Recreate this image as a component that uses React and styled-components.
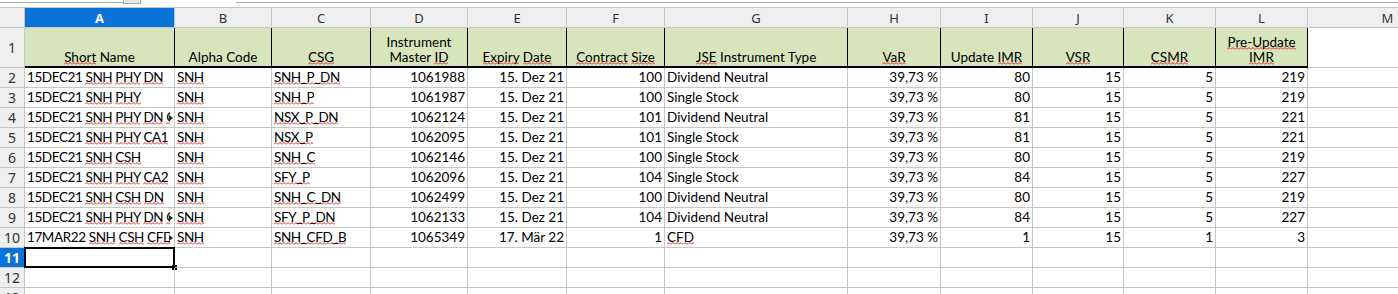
import React from 'react';
import styled, { createGlobalStyle, css } from 'styled-components';

const GlobalStyle = createGlobalStyle`
  html, body {
    margin: 0;
    padding: 0;
    background: #ffffff;
    overflow: hidden;
  }
  body {
    font-family: Lato, "Open Sans", Arial, sans-serif;
  }
`;

const squiggle = `url("data:image/svg+xml,%3Csvg xmlns='http://www.w3.org/2000/svg' width='4' height='3'%3E%3Cpath d='M0 2.5 L2 0.5 L4 2.5' fill='none' stroke='%23e0241b' stroke-width='1'/%3E%3C/svg%3E")`;

const columns = [
  { key: 'A', width: 150 },
  { key: 'B', width: 97 },
  { key: 'C', width: 99 },
  { key: 'D', width: 97 },
  { key: 'E', width: 99 },
  { key: 'F', width: 98 },
  { key: 'G', width: 183 },
  { key: 'H', width: 93 },
  { key: 'I', width: 92 },
  { key: 'J', width: 91 },
  { key: 'K', width: 92 },
  { key: 'L', width: 92 },
  { key: 'M', width: 160 },
];

// text pieces: a plain string, or { s: 'word' } for a word the spell check flags
const headings = [
  [{ s: 'Short' }, ' Name'],
  ['Alpha Code'],
  [{ s: 'CSG' }],
  ['Instrument', '\n', 'Master ', { s: 'ID' }],
  [{ s: 'Expiry' }, ' ', { s: 'Date' }],
  [{ s: 'Contract' }, ' ', { s: 'Size' }],
  [{ s: 'JSE' }, ' Instrument Type'],
  [{ s: 'VaR' }],
  ['Update ', { s: 'IMR' }],
  [{ s: 'VSR' }],
  [{ s: 'CSMR' }],
  [{ s: 'Pre-Update' }, '\n', { s: 'IMR' }],
];

const name = (date, words) => {
  let out = [date];
  words.forEach(w => {
    out.push(' ');
    out.push({ s: w });
  });
  return out;
};

const rows = [
  { a: name('15DEC21', ['SNH', 'PHY', 'DN']), c: 'SNH_P_DN', id: 1061988, exp: '15. Dez 21', size: 100, type: 'Dividend Neutral', imr: 80, csmr: 5, pre: 219 },
  { a: name('15DEC21', ['SNH', 'PHY']), c: 'SNH_P', id: 1061987, exp: '15. Dez 21', size: 100, type: 'Single Stock', imr: 80, csmr: 5, pre: 219 },
  { a: name('15DEC21', ['SNH', 'PHY', 'DN', 'CA1']), clipped: true, c: 'NSX_P_DN', id: 1062124, exp: '15. Dez 21', size: 101, type: 'Dividend Neutral', imr: 81, csmr: 5, pre: 221 },
  { a: name('15DEC21', ['SNH', 'PHY', 'CA1']), c: 'NSX_P', id: 1062095, exp: '15. Dez 21', size: 101, type: 'Single Stock', imr: 81, csmr: 5, pre: 221 },
  { a: name('15DEC21', ['SNH', 'CSH']), c: 'SNH_C', id: 1062146, exp: '15. Dez 21', size: 100, type: 'Single Stock', imr: 80, csmr: 5, pre: 219 },
  { a: name('15DEC21', ['SNH', 'PHY', 'CA2']), c: 'SFY_P', id: 1062096, exp: '15. Dez 21', size: 104, type: 'Single Stock', imr: 84, csmr: 5, pre: 227 },
  { a: name('15DEC21', ['SNH', 'CSH', 'DN']), c: 'SNH_C_DN', id: 1062499, exp: '15. Dez 21', size: 100, type: 'Dividend Neutral', imr: 80, csmr: 5, pre: 219 },
  { a: name('15DEC21', ['SNH', 'PHY', 'DN', 'CA2']), clipped: true, c: 'SFY_P_DN', id: 1062133, exp: '15. Dez 21', size: 104, type: 'Dividend Neutral', imr: 84, csmr: 5, pre: 227 },
  { a: name('17MAR22', ['SNH', 'CSH', 'CFD', 'B']), clipped: true, c: 'SNH_CFD_B', id: 1065349, exp: '17. Mär 22', size: 1, type: [{ s: 'CFD' }], imr: 1, csmr: 1, pre: 3 },
];

const renderText = (pieces) =>
  (Array.isArray(pieces) ? pieces : [pieces]).map((p, i) => {
    if (p === '\n') return <br key={i} />;
    if (typeof p === 'object') return <Spell key={i}>{p.s}</Spell>;
    return <React.Fragment key={i}>{p}</React.Fragment>;
  });

class App extends React.Component {
  renderDataRow = (row, idx) => {
    let cells = [
      { v: row.a, clipped: row.clipped, tight: true },
      { v: [{ s: 'SNH' }], tight: true },
      { v: [{ s: row.c }], tight: true },
      { v: row.id, num: true },
      { v: row.exp, num: true },
      { v: row.size, num: true },
      { v: row.type },
      { v: '39,73 %', num: true },
      { v: row.imr, num: true },
      { v: 15, num: true },
      { v: row.csmr, num: true },
      { v: row.pre, num: true },
      { v: '' },
    ];
    return (
      <React.Fragment key={idx}>
        <RowHeader>{idx + 2}</RowHeader>
        {cells.map((cell, i) => (
          <Cell key={i} $num={cell.num} $tight={cell.tight}>
            <CellText $clipped={cell.clipped}>
              {typeof cell.v === 'number' ? cell.v : renderText(cell.v)}
            </CellText>
            {cell.clipped && <Overflow />}
          </Cell>
        ))}
      </React.Fragment>
    );
  };

  renderEmptyRow = (num, selected) => (
    <React.Fragment key={num}>
      <RowHeader $active={selected}>{num}</RowHeader>
      {columns.map((col, i) => (
        <Cell key={col.key} $selected={selected && i === 0} />
      ))}
    </React.Fragment>
  );

  render() {
    return (
      <>
        <GlobalStyle />
        <Window>
          <FormulaEdge>
            <EdgeLine $w={123} />
            <EdgeKnob />
            <EdgeGap />
            <EdgeLine $grow />
          </FormulaEdge>
          <Sheet $cols={columns.map(c => c.width)}>
            <Corner />
            {columns.map(col => (
              <ColHeader key={col.key} $active={col.key === 'A'}>{col.key}</ColHeader>
            ))}

            <RowHeader>1</RowHeader>
            {headings.map((h, i) => (
              <HeadCell key={i}>
                <span>{renderText(h)}</span>
              </HeadCell>
            ))}
            <Cell />

            {rows.map(this.renderDataRow)}
            {this.renderEmptyRow(11, true)}
            {this.renderEmptyRow(12, false)}
            {this.renderEmptyRow(13, false)}
          </Sheet>
        </Window>
      </>
    );
  }
}

const Window = styled.div`
  width: 1398px;
  height: 294px;
  overflow: hidden;
  background: #ffffff;
`;

const FormulaEdge = styled.div`
  display: flex;
  height: 7px;
  align-items: flex-start;
`;

const EdgeLine = styled.div`
  height: 2px;
  border-bottom: 1px solid #a9a9a9;
  ${props => props.$grow ? css`flex: 1;` : css`width: ${props.$w}px;`}
`;

const EdgeKnob = styled.div`
  width: 16px;
  height: 3px;
  background: #e6e6e6;
  border: 1px solid #a9a9a9;
  border-top: none;
`;

const EdgeGap = styled.div`
  width: 95px;
`;

const Sheet = styled.div`
  display: grid;
  grid-template-columns: 25px ${props => props.$cols.map(w => `${w}px`).join(' ')};
  grid-template-rows: 20px 40px repeat(12, 20px);
  width: max-content;
  color: #000000;
  font-size: 13.5px;
  border-top: 1px solid #c6c6c6;
`;

const headerBox = css`
  box-sizing: border-box;
  background: #efefef;
  border-right: 1px solid #c6c6c6;
  border-bottom: 1px solid #c6c6c6;
  display: flex;
  align-items: center;
  justify-content: center;
  font-family: "Noto Sans", "Open Sans", sans-serif;
  font-size: 13px;
  color: #333333;
`;

const Corner = styled.div`
  ${headerBox}
`;

const ColHeader = styled.div`
  ${headerBox}
  padding-top: 1px;
  ${props => props.$active && css`
    background: #0a73d7;
    color: #ffffff;
    font-weight: 700;
  `}
`;

const RowHeader = styled.div`
  ${headerBox}
  font-size: 14px;
  ${props => props.$active && css`
    background: #0a73d7;
    color: #ffffff;
    font-weight: 700;
  `}
`;

const Cell = styled.div`
  position: relative;
  box-sizing: border-box;
  border-right: 1px solid #c6c6c6;
  border-bottom: 1px solid #c6c6c6;
  display: flex;
  align-items: flex-end;
  justify-content: ${props => props.$num ? 'flex-end' : 'flex-start'};
  padding: 0 2px 1px 2px;
  overflow: hidden;
  white-space: nowrap;
  line-height: 18px;
  letter-spacing: ${props => props.$tight ? '-0.4px' : '0'};
  ${props => props.$selected && css`
    overflow: visible;
    border: 2px solid #000000;
    margin: -1px 0 0 -1px;
    width: calc(100% + 1px);
    height: calc(100% + 1px);
    &::after {
      content: '';
      position: absolute;
      right: -4px;
      bottom: -4px;
      width: 5px;
      height: 5px;
      background: #000000;
    }
  `}
`;

const CellText = styled.span`
  overflow: hidden;
  ${props => props.$clipped && css`
    max-width: 143px;
  `}
`;

const Overflow = styled.span`
  position: absolute;
  right: 1px;
  top: 7px;
  width: 0;
  height: 0;
  border-top: 3px solid transparent;
  border-bottom: 3px solid transparent;
  border-left: 4px solid #222222;
`;

const HeadCell = styled.div`
  box-sizing: border-box;
  background: #d8e4bc;
  border-right: 1px solid #000000;
  border-bottom: 2px solid #000000;
  display: flex;
  align-items: flex-end;
  justify-content: center;
  text-align: center;
  line-height: 15px;
  padding-bottom: 1px;
  white-space: nowrap;
  overflow: hidden;
`;

const Spell = styled.span`
  background-image: ${squiggle};
  background-repeat: repeat-x;
  background-size: 4px 3px;
  background-position: 0 100%;
`;

export default App;
